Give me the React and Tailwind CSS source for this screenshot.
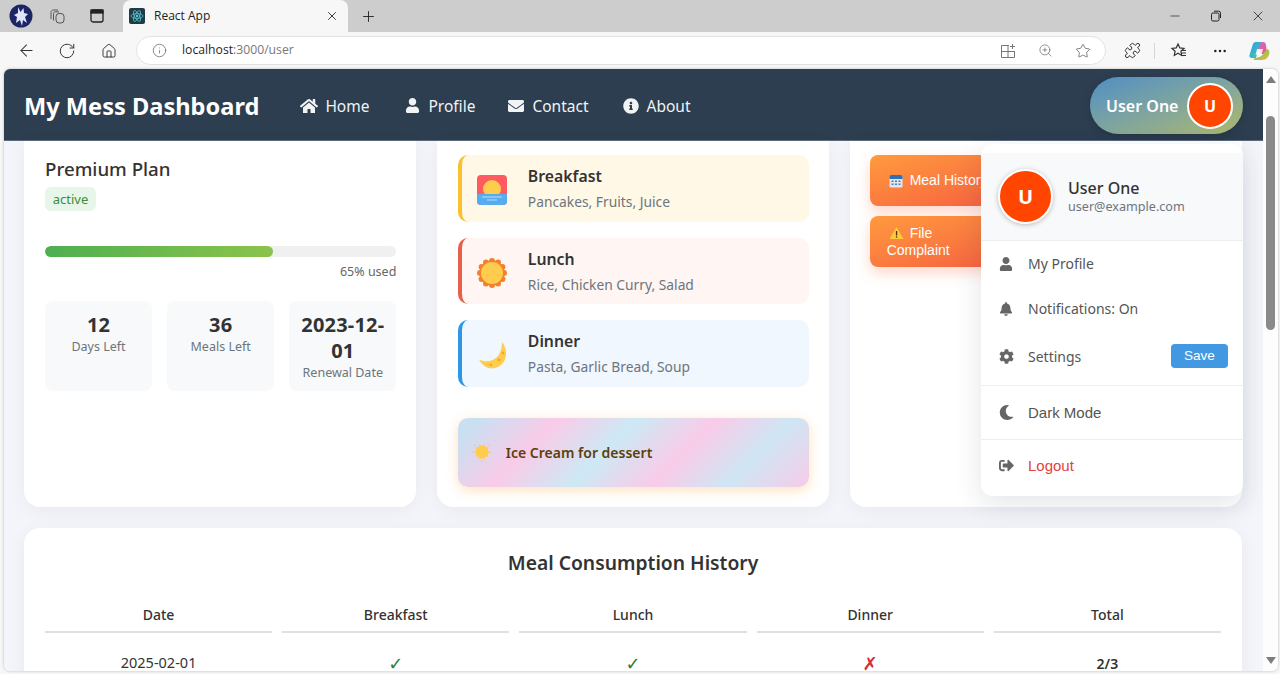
import React from "react";
import { FaHome, FaUser, FaEnvelope, FaInfoCircle, FaBell, FaCog, FaMoon, FaSignOutAlt } from "react-icons/fa";
import { ArrowLeft, RotateCw, Home, Info, ZoomIn, Star, Plus, X, Minus, MoreHorizontal, Puzzle } from "lucide-react";

function Avatar() {
  return (
    <svg width="24" height="24" viewBox="0 0 24 24">
      <circle cx="12" cy="12" r="11.5" fill="#1c2566" />
      <path d="M9 3l2.500 5 3-4 .5 5 4 1-3 3 2 6-4-3-1 6-2-6-4 3 1-6-3-2 4-2z" fill="#dfe6fb" />
    </svg>
  );
}
function TabsIcon() {
  return (
    <svg width="18" height="18" viewBox="0 0 18 18" fill="none" stroke="#555" strokeWidth="1">
      <path d="M3 12V5.5C3 4 4 3 5.5 3H10" />
      <path d="M5.5 13.5V6.5C5.5 5.5 6.5 4.8 7.500 4.800H11" />
      <rect x="8" y="6.500" width="8" height="9.500" rx="3" />
    </svg>
  );
}
function VerticalTabs() {
  return (
    <svg width="16" height="16" viewBox="0 0 16 16" fill="none" stroke="#222" strokeWidth="1.300">
      <rect x="2" y="2" width="12" height="12" rx="2" />
      <rect x="2" y="2" width="12" height="3" fill="#222" />
    </svg>
  );
}
function ReactFav() {
  return (
    <svg width="16" height="16" viewBox="0 0 16 16">
      <rect width="16" height="16" rx="2" fill="#1f3c44" />
      <g fill="none" stroke="#5fd0e6" strokeWidth="0.700">
        <ellipse cx="8" cy="8" rx="6" ry="2.400" />
        <ellipse cx="8" cy="8" rx="6" ry="2.400" transform="rotate(60 8 8)" />
        <ellipse cx="8" cy="8" rx="6" ry="2.400" transform="rotate(120 8 8)" />
      </g>
      <circle cx="8" cy="8" r="1.200" fill="#5fd0e6" />
    </svg>
  );
}
function RestoreIcon() {
  return (
    <svg width="12" height="12" viewBox="0 0 12 12" fill="none" stroke="#222" strokeWidth="1">
      <rect x="1.500" y="3" width="7.500" height="8" rx="1.500" />
      <path d="M4 1.200h4.500A2 2 0 0 1 10.500 3.200V8" />
    </svg>
  );
}
function SplitIcon() {
  return (
    <svg width="16" height="16" viewBox="0 0 16 16" fill="none" stroke="#777" strokeWidth="1">
      <path d="M9 2.500H1.500v12h13V8M1.500 8.500h13M8 2.500v12M12.500 1v5M10 3.500h5" />
    </svg>
  );
}
function FavList() {
  return (
    <svg width="18" height="18" viewBox="0 0 18 18" fill="none" stroke="#333" strokeWidth="1.200">
      <path d="M8 2l1.800 3.900 4.200.5-3.100 2.800.8 4.200L8 11.300 4.300 13.400l.8-4.200L2 6.400l4.200-.5z" />
      <path d="M12 8.500h4M12 11h4M11 13.500h5" />
    </svg>
  );
}
function Copilot() {
  return (
    <svg width="22" height="22" viewBox="0 0 22 22">
      <defs>
        <linearGradient id="cp1" x1="0" y1="0" x2="1" y2="1"><stop offset="0" stopColor="#2f9bf0" /><stop offset="1" stopColor="#3fd0a0" /></linearGradient>
        <linearGradient id="cp2" x1="0" y1="0" x2="1" y2="1"><stop offset="0" stopColor="#c86be0" /><stop offset="1" stopColor="#f05a70" /></linearGradient>
        <linearGradient id="cp3" x1="0" y1="0" x2="1" y2="1"><stop offset="0" stopColor="#4cc66a" /><stop offset="1" stopColor="#f5b83c" /></linearGradient>
      </defs>
      <path d="M7 2h8c2 0 2.500 1 3 3l1 9H12z" fill="url(#cp2)" />
      <path d="M8 2C6 2 5 3.500 4.500 5.500L1.500 15c-.5 2 .5 3 2.500 3H8l3-11c.5-2 1.500-4 3-5z" fill="url(#cp1)" />
      <path d="M14 20H7c-1 0-1.500-.5-1-1.500 2-1 8-.5 10-6l3.500-3.500c2 1 2.200 3 1.700 5-.8 3-2.700 6-7.200 6z" fill="url(#cp3)" />
      <path d="M9 9h6l-1.500 6H7.500z" fill="#fff" opacity="0.850" />
    </svg>
  );
}
function Sunrise() {
  return (
    <svg width="30" height="30" viewBox="0 0 30 30">
      <rect width="30" height="30" rx="4" fill="#ff5a5f" />
      <circle cx="15" cy="14" r="9" fill="#ffcc4d" />
      <path d="M0 19h30v7a4 4 0 0 1-4 4H4a4 4 0 0 1-4-4z" fill="#55acee" />
      <path d="M5 22h20M10 25h10" stroke="#bbddf5" strokeWidth="1.200" />
    </svg>
  );
}
function Sun() {
  const bumps = Array.from({ length: 12 }, (_, i) => {
    const a = (i / 12) * Math.PI * 2;
    return [15 + 12 * Math.cos(a), 15 + 12 * Math.sin(a)];
  });
  return (
    <svg width="30" height="30" viewBox="0 0 30 30">
      {bumps.map(([x, y], i) => (
        <circle key={i} cx={x} cy={y} r="3" fill="#f4802c" />
      ))}
      <circle cx="15" cy="15" r="12.500" fill="#f4802c" />
      <circle cx="15" cy="15" r="11" fill="#ffcc4d" />
    </svg>
  );
}
function Moon() {
  return (
    <svg width="30" height="30" viewBox="0 0 30 30">
      <path d="M25 2C30 8 31 18 25 24C19 30 8 31 2 19.500C9 23 17 21 21 16C24 12 25 7 25 2z" fill="#ffcc4d" />
      <circle cx="22" cy="20" r="1.400" fill="#f4a62c" />
      <circle cx="26" cy="13" r="1.400" fill="#f4a62c" />
      <circle cx="14" cy="25" r="1.300" fill="#f4a62c" />
    </svg>
  );
}
function Glow() {
  const pts = [];
  for (let i = 0; i < 20; i++) {
    const a = (i / 20) * Math.PI * 2;
    const r = i % 2 ? 5.800 : 8;
    pts.push(`${10 + r * Math.cos(a)},${10 + r * Math.sin(a)}`);
  }
  return (
    <svg width="20" height="20" viewBox="0 0 20 20">
      <polygon points={pts.join(" ")} fill="#ffcc4d" />
      <circle cx="1" cy="10" r="0.800" fill="#f9c96a" />
      <circle cx="19" cy="11" r="0.800" fill="#f9c96a" />
      <circle cx="10" cy="19.200" r="0.800" fill="#f9c96a" />
      <circle cx="3" cy="3" r="0.800" fill="#f9c96a" />
      <circle cx="17" cy="3" r="0.800" fill="#f9c96a" />
    </svg>
  );
}
function Calendar() {
  return (
    <svg width="14" height="14" viewBox="0 0 14 14">
      <rect x="0.500" y="1" width="13" height="12.500" rx="1.500" fill="#dfe6f2" />
      <path d="M0.500 2.500A1.500 1.500 0 0 1 2 1h10a1.500 1.500 0 0 1 1.500 1.500V5H.5z" fill="#2f6fb5" />
      <path d="M2.500 6.500h2v1.500h-2zM6 6.500h2v1.500H6zM9.500 6.500h2v1.500h-2zM2.500 9.500h2V11h-2zM6 9.500h2V11H6zM9.500 9.500h2V11h-2z" fill="#5a7ca8" />
    </svg>
  );
}
function Warning() {
  return (
    <svg width="15" height="14" viewBox="0 0 15 14">
      <path d="M7.500 1L14.500 13H.5z" fill="#ffc83d" />
      <rect x="6.900" y="5" width="1.300" height="4.500" fill="#4a3500" />
      <rect x="6.900" y="10.400" width="1.300" height="1.300" fill="#4a3500" />
    </svg>
  );
}

function Chrome() {
  return (
    <div className="shrink-0">
      <div className="h-8 bg-[#cdcdcd] flex items-center relative">
        <div className="w-[123px] flex items-center pl-[9px] gap-[15px] h-8">
          <Avatar />
          <TabsIcon />
          <span className="ml-2 flex"><VerticalTabs /></span>
        </div>
        <div className="w-[225px] h-8 bg-[#f7f7f7] rounded-t-lg flex items-center pl-[6px] pr-[9px] self-end">
          <ReactFav />
          <span className="ml-[9px] text-[12px] text-[#222] flex-1 font-['Open_Sans',sans-serif]">React App</span>
          <X size={14} strokeWidth={1.500} color="#222" />
        </div>
        <div className="ml-[12px]"><Plus size={17} strokeWidth={1.300} color="#222" /></div>
        <div className="ml-auto flex items-center pr-[14px] gap-[28px]">
          <Minus size={14} strokeWidth={1.200} color="#222" />
          <RestoreIcon />
          <X size={16} strokeWidth={1.200} color="#222" />
        </div>
      </div>
      <div className="h-[37px] bg-[#f7f7f7] flex items-center">
        <div className="w-[136px] flex items-center pl-[17px]">
          <ArrowLeft size={19} strokeWidth={1.300} color="#333" />
          <span className="ml-[22px] flex"><RotateCw size={18} strokeWidth={1.300} color="#333" /></span>
          <span className="ml-[25px] flex"><Home size={16} strokeWidth={1.400} color="#333" /></span>
        </div>
        <div className="w-[970px] h-[29px] bg-white rounded-full border border-[#e2e2e2] flex items-center pl-[15px] pr-[14px]">
          <Info size={15} strokeWidth={1.200} color="#666" />
          <span className="ml-[15px] text-[12.200px] font-['Open_Sans',sans-serif] text-[#1f1f1f]">localhost<span className="text-[#777]">:3000/user</span></span>
          <div className="ml-auto flex items-center gap-[22px]">
            <SplitIcon />
            <ZoomIn size={15} strokeWidth={1.100} color="#666" />
            <Star size={16} strokeWidth={1.100} color="#555" />
          </div>
        </div>
        <div className="flex items-center ml-[18px]">
          <Puzzle size={17} strokeWidth={1.300} color="#222" />
          <span className="w-px h-4 bg-[#d5d5d5] ml-[13px]" />
          <span className="ml-[15px] flex"><FavList /></span>
          <span className="ml-[24px] flex"><MoreHorizontal size={16} strokeWidth={1.800} color="#222" /></span>
          <span className="ml-[20px] flex"><Copilot /></span>
        </div>
      </div>
    </div>
  );
}

function Navbar() {
  const links = [
    [FaHome, "Home", "ml-[42px]", 18],
    [FaUser, "Profile", "ml-[35px]", 15],
    [FaEnvelope, "Contact", "ml-[33px]", 16],
    [FaInfoCircle, "About", "ml-[34px]", 16],
  ];
  return (
    <div className="shrink-0 h-[72px] bg-[#2c3e50] border-b border-[#5c6b7c] flex items-center pl-5 pr-5 pt-[2px] text-white">
      <span className="text-[23.600px] font-bold mt-[2px]">My Mess Dashboard</span>
      {links.map(([Icon, label, ml, size]) => (
        <div key={label} className={`flex items-center gap-[8px] text-[15.500px] text-[#f1f3f5] ${ml}`}>
          <span className="w-[16px] flex justify-center"><Icon size={size} className="shrink-0" /></span>
          <span className="mt-[2px]">{label}</span>
        </div>
      ))}
      <div className="ml-auto h-[57px] w-[153px] rounded-full bg-gradient-to-br from-[#4f8dc4] to-[#aeb86a] flex items-center pl-4 pr-[10px] shadow-[0_2px_8px_rgba(0,0,0,0.15)]">
        <span className="text-[16px] font-semibold flex-1">User One</span>
        <div className="w-[46px] h-[46px] rounded-full bg-[#ff4500] border-2 border-white flex items-center justify-center font-bold text-[16px]">U</div>
      </div>
    </div>
  );
}

function Stat({ num, label }) {
  return (
    <div className="bg-[#f8f9fa] rounded-lg h-[90px] pt-[11px] px-2 text-center">
      <div className="text-[20px] leading-[26px] font-bold text-[#333] tracking-[0.2px]">{num}</div>
      <div className="text-[12.500px] leading-[18px] text-[#6c757d]">{label}</div>
    </div>
  );
}

function PlanCard() {
  return (
    <div className="bg-white rounded-b-2xl shadow-[0_4px_20px_rgba(0,0,0,0.05)] h-[366px] pl-[21px] pr-[20px] pt-[13px]">
      <div className="text-[18.700px] leading-[30px] font-medium text-[#333]">Premium Plan</div>
      <div className="mt-[3px] w-[51px] h-[24px] pt-px rounded-md bg-[#e8f5e9] text-[#388e3c] text-[13px] flex items-center justify-center">active</div>
      <div className="mt-[35px] h-[11px] rounded-full bg-[#f0f0f0] overflow-hidden">
        <div className="h-full w-[65%] rounded-full bg-gradient-to-r from-[#4caf50] to-[#8bc34a]" />
      </div>
      <div className="mt-[6px] text-right text-[12.500px] leading-[18px] text-[#666]">65% used</div>
      <div className="mt-[20px] grid grid-cols-3 gap-[15px]">
        <Stat num="12" label="Days Left" />
        <Stat num="36" label="Meals Left" />
        <Stat num="2023-12-01" label="Renewal Date" />
      </div>
    </div>
  );
}

function Meal({ icon, title, sub, cls }) {
  return (
    <div className={`h-[66.500px] rounded-[10px] border-l-4 flex items-center pl-[15px] ${cls}`}>
      <span className="w-[30px] flex justify-center mt-[4px]">{icon}</span>
      <div className="ml-[21px] pt-[1px]">
        <div className="text-[15.800px] leading-[24px] font-semibold text-[#333]">{title}</div>
        <div className="mt-[3px] text-[13.800px] leading-[22px] text-[#6c757d]">{sub}</div>
      </div>
    </div>
  );
}

function MealsCard() {
  return (
    <div className="bg-white rounded-b-2xl shadow-[0_4px_20px_rgba(0,0,0,0.05)] h-[366px] pl-[21px] pr-[20px] pt-[14px]">
      <div className="flex flex-col gap-[16px]">
        <Meal icon={<Sunrise />} title="Breakfast" sub="Pancakes, Fruits, Juice" cls="bg-[#fff8e7] border-[#fbc02d]" />
        <Meal icon={<Sun />} title="Lunch" sub="Rice, Chicken Curry, Salad" cls="bg-[#fff5f3] border-[#e8604c]" />
        <Meal icon={<Moon />} title="Dinner" sub="Pasta, Garlic Bread, Soup" cls="bg-[#f0f7ff] border-[#2d96e6]" />
      </div>
      <div className="mt-[31px] h-[69px] rounded-[10px] bg-[linear-gradient(135deg,#c9e0f2_5%,#f9cbe8_24%,#cde9f5_43%,#f9cbe8_62%,#cfe6f4_80%,#f6cbe8_100%)] shadow-[0_3px_12px_rgba(255,170,60,0.35)] flex items-center pl-[14px]">
        <Glow />
        <span className="ml-[14px] text-[14px] font-semibold text-[#5d3f0a]">Ice Cream for dessert</span>
      </div>
    </div>
  );
}

function ActionBtn({ children, cls }) {
  return (
    <div className={`w-[170px] rounded-lg bg-gradient-to-br from-[#ff9a3e] to-[#f4573f] text-white text-[14px] leading-[17px] font-['Liberation_Sans',Arial,sans-serif] pl-[17px] flex items-center shadow-[0_6px_14px_rgba(255,110,60,0.28)] ${cls}`}>
      {children}
    </div>
  );
}

function ActionsCard() {
  return (
    <div className="bg-white rounded-b-2xl shadow-[0_4px_20px_rgba(0,0,0,0.05)] h-[366px] pl-[20px] pr-[20px] pt-[14px]">
      <div className="flex flex-col gap-[10px]">
        <ActionBtn cls="h-[51px]">
          <span className="flex items-center gap-[7px] ml-[2px]"><Calendar /><span>Meal History</span></span>
        </ActionBtn>
        <ActionBtn cls="h-[51px]">
          <span className="w-[70px]"><span className="inline-block align-[-2px] ml-[2px] mr-[6px]"><Warning /></span>File Complaint</span>
        </ActionBtn>
      </div>
    </div>
  );
}

function MenuItem({ Icon, children, h, right, iconSize = 15, cls = "" }) {
  return (
    <div className={`flex items-center pl-[17px] pr-[15px] ${h}`}>
      <span className="w-[16px] flex justify-center text-[#666]"><Icon size={iconSize} /></span>
      <span className={`ml-[14px] ${cls || "text-[14px] text-[#555]"}`}>{children}</span>
      {right}
    </div>
  );
}

function Dropdown() {
  return (
    <div className="absolute left-[977px] top-[75px] w-[262px] h-[352px] rounded-xl bg-white pt-[9px] shadow-[0_8px_28px_rgba(30,40,80,0.12)] overflow-hidden">
      <div className="h-[88px] bg-[#f8f9fa] border-b border-[#eceef0] flex items-center pl-[17px]">
        <div className="w-[55px] h-[55px] rounded-full bg-[#ff4500] border-2 border-white shadow-[0_1px_5px_rgba(0,0,0,0.25)] flex items-center justify-center text-white font-bold text-[20px]">U</div>
        <div className="ml-[15px] pt-[1px]">
          <div className="text-[16px] leading-[20px] font-medium text-[#333]">User One</div>
          <div className="text-[12.600px] leading-[18px] text-[#6c757d]">user@example.com</div>
        </div>
      </div>
      <MenuItem Icon={FaUser} iconSize={14} h="h-[45px]">My Profile</MenuItem>
      <MenuItem Icon={FaBell} iconSize={14} h="h-[45px]">Notifications: On</MenuItem>
      <div className="border-b border-[#eceef0] pb-[4px]">
        <MenuItem
          Icon={FaCog}
          iconSize={15}
          h="h-[50px]"
          right={<span className="ml-auto w-[57px] h-[24px] rounded bg-[#4299e1] text-white text-[13.500px] font-['Liberation_Sans',Arial,sans-serif] flex items-center justify-center">Save</span>}
        >
          Settings
        </MenuItem>
      </div>
      <div className="border-b border-[#eceef0]">
        <MenuItem Icon={FaMoon} iconSize={15} h="h-[53px]" cls="mt-[2px] text-[15px] font-['Liberation_Sans',Arial,sans-serif] text-[#555]">Dark Mode</MenuItem>
      </div>
      <MenuItem Icon={FaSignOutAlt} iconSize={15} h="h-[51px]" cls="mt-[2px] text-[15px] font-['Liberation_Sans',Arial,sans-serif] text-[#e53e3e]">Logout</MenuItem>
    </div>
  );
}

function HistoryCard() {
  const heads = ["Date", "Breakfast", "Lunch", "Dinner", "Total"];
  return (
    <div className="shrink-0 ml-5 mr-[21px] mt-[21px] bg-white rounded-2xl shadow-[0_4px_20px_rgba(0,0,0,0.05)] px-[11px] pt-[20px] h-[220px]">
      <h2 className="text-[19.300px] leading-[30px] font-semibold text-[#333] text-center">Meal Consumption History</h2>
      <table className="mt-[18px] w-full table-fixed border-separate [border-spacing:10px_0] text-[14.500px] text-center text-[#333]">
        <thead>
          <tr>
            {heads.map((h) => (
              <th key={h} className="h-[37px] pt-[2px] text-[14px] font-medium border-b-2 border-[#e0e0e0]">{h}</th>
            ))}
          </tr>
        </thead>
        <tbody>
          <tr>
            <td className="h-[60px]">2025-02-01</td>
            <td className="text-[#2e7d32] text-[18px] font-['DejaVu_Sans',sans-serif]">✓</td>
            <td className="text-[#2e7d32] text-[18px] font-['DejaVu_Sans',sans-serif]">✓</td>
            <td className="text-[#d32f2f] text-[18px] font-['DejaVu_Sans',sans-serif]">✗</td>
            <td className="font-semibold text-[14px]">2/3</td>
          </tr>
        </tbody>
      </table>
    </div>
  );
}

function Scrollbar() {
  return (
    <div className="w-[15px] shrink-0 bg-[#fdfdfd] flex flex-col items-center pt-[7px] pb-[7px]">
      <span className="w-0 h-0 border-x-[5px] border-x-transparent border-b-[7px] border-b-[#7d7d7d]" />
      <span className="mt-[33px] w-[9px] h-[214px] rounded-full bg-[#8a8a8a]" />
      <span className="mt-auto w-0 h-0 border-x-[5px] border-x-transparent border-t-[7px] border-t-[#7d7d7d]" />
    </div>
  );
}

export default function App() {
  return (
    <div className="w-[1280px] h-[674px] bg-[#f7f7f7] overflow-hidden flex flex-col font-['Noto_Sans',sans-serif]">
      <Chrome />
      <div className="flex-1 min-h-0 flex ml-1 mr-[2px] mb-[3px] rounded-md overflow-hidden shadow-[0_0_3px_rgba(0,0,0,0.25)]">
        <div className="flex-1 min-w-0 relative overflow-hidden bg-[#f3f5fa] flex flex-col">
          <Navbar />
          <div className="shrink-0 grid grid-cols-3 gap-[20.500px] pl-5 pr-[21px]">
            <PlanCard />
            <MealsCard />
            <ActionsCard />
          </div>
          <HistoryCard />
          <Dropdown />
        </div>
        <Scrollbar />
      </div>
    </div>
  );
}
